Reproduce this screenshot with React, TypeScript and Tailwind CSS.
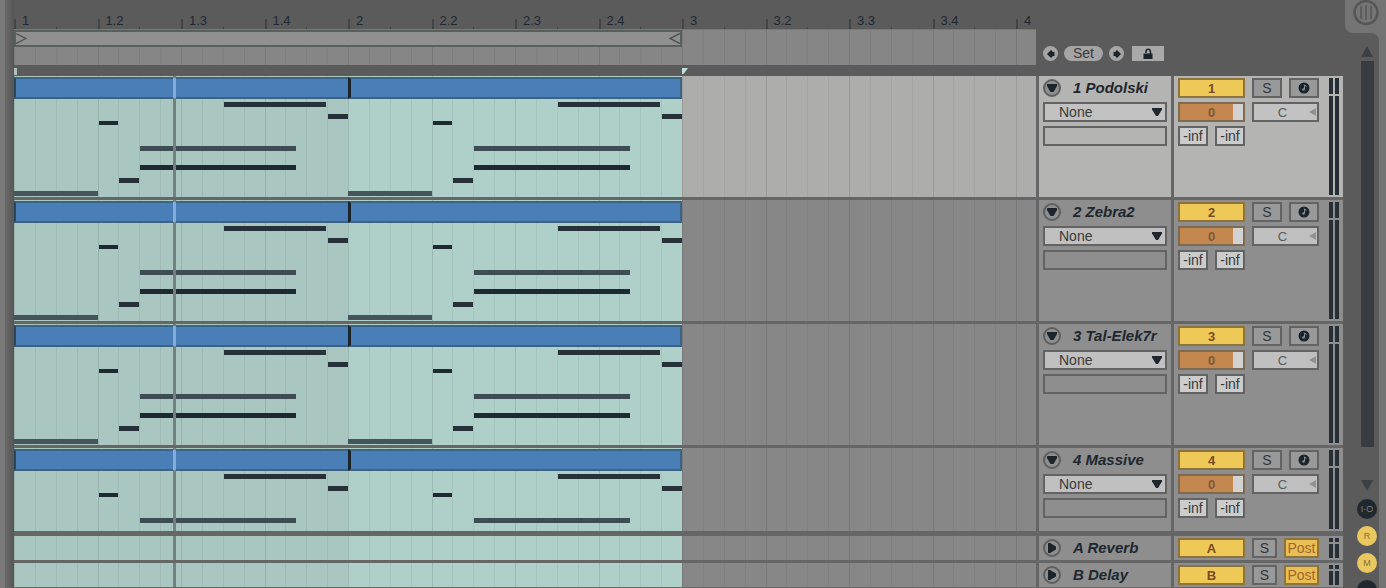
import { useState } from 'react';

interface Track {
  id: string;
  name: string;
  selected?: boolean;
  short?: boolean;
}

interface Note {
  start: number;
  length: number;
  y: number;
  h: number;
  color: string;
}

const TRACKS: Track[] = [
  { id: '1', name: 'Podolski', selected: true },
  { id: '2', name: 'Zebra2' },
  { id: '3', name: 'Tal-Elek7r' },
  { id: '4', name: 'Massive', short: true },
];

const RETURNS: Track[] = [
  { id: 'A', name: 'Reverb' },
  { id: 'B', name: 'Delay' },
];

const BEATS = ['1', '1.2', '1.3', '1.4', '2', '2.2', '2.3', '2.4', '3', '3.2', '3.3', '3.4', '4'];

// start and length in sixteenths, y in pixels from the top of the clip body
const NOTES: Note[] = [
  { start: 10.05, length: 4.9, y: 3, h: 5, color: '#27313a' },
  { start: 15.05, length: 0.95, y: 15, h: 5, color: '#27313a' },
  { start: 4.05, length: 0.95, y: 22, h: 4, color: '#1f2932' },
  { start: 6.05, length: 7.45, y: 47, h: 5, color: '#3e4d54' },
  { start: 6.05, length: 7.45, y: 66, h: 5, color: '#1f2932' },
  { start: 5.05, length: 0.95, y: 79, h: 5, color: '#27313a' },
  { start: 0, length: 4, y: 92, h: 5, color: '#45545a' },
];

function GridLines() {
  return (
    <div className="pointer-events-none absolute inset-0 grid grid-cols-[repeat(48,minmax(0,167fr))_minmax(0,160fr)]">
      {Array.from({ length: 49 }, (_, i) => (
        <div
          key={i}
          className={i % 4 === 0 ? 'border-l border-black/10' : 'border-l border-black/5'}
        />
      ))}
    </div>
  );
}

function Clip({ first }: { first?: boolean }) {
  return (
    <div className={`h-full overflow-hidden pt-px ${first ? 'bg-[#a9c6c0]' : 'bg-[#afcfc9]'}`}>
      <div
        className={`relative z-10 h-[22px] border-y-2 border-y-[#3d6384] bg-[#4a7eb6] ${
          first ? 'border-l-2 border-l-[#2c4558]' : 'border-r-2 border-l-3 border-r-[#3d6384] border-l-[#1c242c]'
        }`}
      />
      <svg
        className="relative z-10 block h-[98px] w-full"
        viewBox="0 0 16 98"
        preserveAspectRatio="none"
        shapeRendering="crispEdges"
        aria-hidden="true"
      >
        {NOTES.map((n) => (
          <rect key={`${n.start}-${n.y}`} x={n.start} y={n.y} width={n.length} height={n.h} fill={n.color} />
        ))}
      </svg>
    </div>
  );
}

function Lane({ withClips, selected }: { withClips?: boolean; selected?: boolean }) {
  return (
    <div className={`relative min-w-0 flex-1 ${selected ? 'bg-[#adadab]' : 'bg-[#878787]'}`}>
      <div className="grid h-full grid-cols-[334fr_334fr_354fr] overflow-hidden">
        {withClips ? (
          <>
            <Clip first />
            <Clip />
          </>
        ) : (
          <>
            <div className="bg-[#a9c6c0]" />
            <div className="bg-[#afcfc9]" />
          </>
        )}
      </div>
      <GridLines />
      <div className="absolute inset-y-0 left-[15.6%] z-20 w-[3px] bg-[#71817f]">
        {withClips && <div className="mt-[2px] h-5 bg-[#84acdb]" />}
      </div>
    </div>
  );
}

function FoldButton({ open, label }: { open: boolean; label: string }) {
  return (
    <button
      type="button"
      aria-label={label}
      className="flex h-[18px] w-[18px] shrink-0 items-center justify-center rounded-full border-2 border-[#5f5f5f] bg-[#8f8f8f]"
    >
      <svg viewBox="0 0 12 12" className="h-3 w-3" fill="#1c242c" aria-hidden="true">
        {open ? <path d="M1 2h10v2L7.500 10h-3L1 4z" /> : <path d="M2 1h2l6 3.500v3L4 11H2z" />}
      </svg>
    </button>
  );
}

function Meter({ short }: { short?: boolean }) {
  return (
    <div className="flex w-[10px] gap-[2px] py-[2px]">
      {[0, 1].map((i) => (
        <div key={i} className="flex flex-1 flex-col gap-[2px]">
          <div className={`bg-[#272e35] ${short ? 'h-1' : 'h-4'}`} />
          <div className="flex-1 bg-[#272e35]" />
        </div>
      ))}
    </div>
  );
}

function Activator({ id }: { id: string }) {
  const [on, setOn] = useState(true);

  return (
    <button
      type="button"
      aria-pressed={on}
      onClick={() => setOn(!on)}
      className={`h-5 w-[67px] border-2 text-[13px] leading-none font-bold text-[#7a4a22] ${
        on ? 'border-[#8d743c] bg-[#efc957]' : 'border-[#606060] bg-[#999999]'
      }`}
    >
      {id}
    </button>
  );
}

const boxClass = 'block h-5 border-2 border-[#636363] text-center leading-none';

function TrackRow({ track }: { track: Track }) {
  const title = `${track.id} ${track.name}`;
  const panel = track.selected ? 'bg-[#b4b4b2]' : 'bg-[#8e8e8e]';
  const field = track.selected ? 'bg-[#c2c2c2]' : 'bg-[#c0c0c0]';

  return (
    <div
      className={`flex border-[#666666] ${track.short ? 'h-[88px] border-b-[5px]' : 'h-[124px] border-b-[3px]'}`}
    >
      <Lane withClips selected={track.selected} />
      <div className={`flex w-[138px] shrink-0 flex-col gap-1 border-x-[3px] border-[#666666] px-1 pt-[2px] ${panel}`}>
        <div className="flex h-5 items-center gap-3">
          <FoldButton open label={`Fold ${title}`} />
          <h2 className="text-[15px] leading-5 font-bold whitespace-nowrap text-[#20272e] italic">{title}</h2>
        </div>
        <div className="relative">
          <select
            aria-label={`${title} device`}
            className={`block h-5 w-full appearance-none border-2 border-[#636363] pl-[14px] text-sm leading-none text-[#3a3a3a] ${field}`}
          >
            <option>None</option>
          </select>
          <svg viewBox="0 0 10 8" className="pointer-events-none absolute top-[6px] right-[5px] h-2 w-[10px]" fill="#20272e" aria-hidden="true">
            <path d="M0 0h10v1.500L6 8H4L0 1.500z" />
          </svg>
        </div>
        <input
          type="text"
          aria-label={`${title} parameter`}
          className={`w-full ${boxClass} ${panel}`}
        />
      </div>
      <div className={`flex w-[169px] shrink-0 justify-between px-1 ${panel}`}>
        <div className="flex flex-col gap-1 pt-[2px]">
          <div className="flex gap-[7px]">
            <Activator id={track.id} />
            <button type="button" aria-label={`Solo ${title}`} className={`${boxClass} w-[30px] bg-[#999999] text-sm text-[#30363b]`}>
              S
            </button>
            <button type="button" aria-label={`Arm ${title}`} className={`${boxClass} w-[30px] bg-[#999999]`}>
              <svg viewBox="0 0 12 12" className="mx-auto h-3 w-3" aria-hidden="true">
                <circle cx="6" cy="6" r="5.500" fill="#1c242c" />
                <path d="M6.500 7V3l2 1.500" stroke="#8a8f93" strokeWidth="1" fill="none" />
                <circle cx="5.500" cy="7.500" r="1.300" fill="#8a8f93" />
              </svg>
            </button>
          </div>
          <div className="flex gap-[7px]">
            <input
              type="text"
              aria-label={`${title} volume`}
              defaultValue="0"
              className="block h-5 w-[67px] border-2 border-[#7d6a52] bg-[linear-gradient(90deg,#c58750_84%,#d2d2d2_84%)] text-center text-[13px] leading-none font-bold text-[#7d5a36]"
            />
            <div className="relative">
              <input
                type="text"
                aria-label={`${title} pan`}
                defaultValue="C"
                className={`${boxClass} w-[67px] pr-[6px] text-[13px] text-[#5a5a5a] ${field}`}
              />
              <svg viewBox="0 0 7 8" className="pointer-events-none absolute top-[6px] right-[3px] h-2 w-[7px]" fill="#929292" aria-hidden="true">
                <path d="M7 0v8L0 4z" />
              </svg>
            </div>
          </div>
          <div className="flex gap-[7px]">
            {['A', 'B'].map((send) => (
              <input
                key={send}
                type="text"
                aria-label={`${title} send ${send}`}
                defaultValue="-inf"
                className={`${boxClass} w-[30px] bg-[#cccccc] text-sm text-[#3a3a3a]`}
              />
            ))}
          </div>
        </div>
        <Meter />
      </div>
    </div>
  );
}

function ReturnRow({ track }: { track: Track }) {
  const title = `${track.id} ${track.name}`;

  return (
    <div className="flex h-[27px] border-b-[3px] border-[#666666]">
      <Lane />
      <div className="flex w-[138px] shrink-0 items-center gap-3 border-x-[3px] border-[#666666] bg-[#8e8e8e] px-1">
        <FoldButton open={false} label={`Unfold ${title}`} />
        <h2 className="text-[15px] leading-5 font-bold whitespace-nowrap text-[#20272e] italic">{title}</h2>
      </div>
      <div className="flex w-[169px] shrink-0 justify-between bg-[#8e8e8e] px-1">
        <div className="flex items-center gap-[7px]">
          <Activator id={track.id} />
          <button type="button" aria-label={`Solo ${title}`} className={`${boxClass} w-[25px] bg-[#999999] text-sm text-[#30363b]`}>
            S
          </button>
          <button
            type="button"
            className="h-5 w-[35px] overflow-hidden border-2 border-[#8d743c] bg-[#e9bf55] text-center text-sm leading-none text-[#a2652f]"
          >
            Post
          </button>
        </div>
        <Meter short />
      </div>
    </div>
  );
}

function Ruler() {
  return (
    <div className="min-w-0 flex-1">
      <div className="grid h-[29px] grid-cols-[repeat(12,minmax(0,167fr))_minmax(0,40fr)] items-end">
        {BEATS.map((beat, i) => (
          <div key={beat} className="grid grid-cols-2 items-end">
            <span className="h-[10px] border-l-2 border-[#444444] pl-[6px] text-[13px] leading-[4px] text-[#1f2933]">
              {beat}
            </span>
            {i < 12 && <span className="h-[2px] border-l border-[#444444]" />}
          </div>
        ))}
      </div>
      <div className="relative h-9 border-t border-[#777777] bg-[#868686]">
        <GridLines />
        <div className="relative grid grid-cols-[668fr_354fr]">
          <div className="flex h-[17px] items-center justify-between border-2 border-[#595f5d] bg-[#909090]">
            <svg viewBox="0 0 11 11" className="h-[11px] w-[11px]" fill="none" stroke="#555a5a" strokeWidth="1.500" aria-hidden="true">
              <path d="M0 .5 10 5.500 0 10.500" />
            </svg>
            <svg viewBox="0 0 11 11" className="h-[11px] w-[11px]" fill="none" stroke="#4c5252" strokeWidth="1.500" aria-hidden="true">
              <path d="M11 .5 1 5.500l10 5" />
            </svg>
          </div>
        </div>
      </div>
      <div className="grid h-[11px] grid-cols-[668fr_354fr] items-end pb-px">
        <svg viewBox="0 0 6 8" className="h-2 w-[6px]" fill="#aebfbc" aria-hidden="true">
          <path d="M0 1h3v7H0z" />
        </svg>
        <svg viewBox="0 0 6 8" className="h-2 w-[6px]" fill="#c0e0dc" aria-hidden="true">
          <path d="M0 1h6L1.500 7H0z" />
        </svg>
      </div>
    </div>
  );
}

function LocatorBar() {
  const round = 'flex h-[15px] w-[15px] items-center justify-center rounded-full bg-[#a5a5a5]';

  return (
    <div className="flex w-[307px] shrink-0 items-start pt-[46px] pl-[7px]">
      <button type="button" aria-label="Previous locator" className={round}>
        <svg viewBox="0 0 10 10" className="h-[10px] w-[10px]" fill="#1c242c" aria-hidden="true">
          <path d="M1 5l4-4 2 2h1.500v4H7L5 9z" />
        </svg>
      </button>
      <button type="button" className="ml-[6px] h-[15px] w-[39px] rounded-full bg-[#a5a5a5] text-sm leading-[15px] text-[#3a3a3a]">
        Set
      </button>
      <button type="button" aria-label="Next locator" className={`ml-[6px] ${round}`}>
        <svg viewBox="0 0 10 10" className="h-[10px] w-[10px]" fill="#1c242c" aria-hidden="true">
          <path d="M9 5L5 1 3 3H1.500v4H3l2 2z" />
        </svg>
      </button>
      <button type="button" aria-label="Lock envelopes" className="ml-2 flex h-[15px] w-8 items-center justify-center bg-[#a9a9a9]">
        <svg viewBox="0 0 12 12" className="h-3 w-3" aria-hidden="true">
          <path d="M4 5V3.500a2.200 2.200 0 0 1 4.400 0V6" stroke="#1c242c" strokeWidth="1.500" fill="none" />
          <path d="M1.500 5.500h9V11h-9z" fill="#1c242c" />
        </svg>
      </button>
    </div>
  );
}

function SideBar() {
  const badge =
    'h-5 w-5 shrink-0 rounded-full text-center text-[9px] leading-5';

  return (
    <aside className="flex w-[43px] shrink-0 flex-col bg-[#747474]">
      <div className="bg-[#5b5b5b]">
        <div className="ml-[2px] flex h-[33px] justify-center rounded-bl-lg bg-[#747474]">
          <button type="button" aria-label="Session view" className="h-[26px] w-[26px]">
            <svg viewBox="0 0 26 26" className="h-[26px] w-[26px]" fill="none" stroke="#565656" aria-hidden="true">
              <circle cx="13" cy="12.500" r="11.500" strokeWidth="2.500" />
              <path d="M8 6v13M13 5v15M18 6v13" strokeWidth="1.500" />
            </svg>
          </button>
        </div>
      </div>
      <div className="mr-[7px] flex min-h-0 flex-1 flex-col items-center overflow-hidden rounded-tr-lg bg-[#5b5b5b] pt-[13px] pl-3">
        <svg viewBox="0 0 12 11" className="h-[11px] w-3 shrink-0" fill="#3c4044" aria-hidden="true">
          <path d="M6 0l6 11H0z" />
        </svg>
        <div className="mt-1 w-[13px] flex-1 bg-[#383b40]" />
        <svg viewBox="0 0 12 11" className="mt-[33px] h-[11px] w-3 shrink-0" fill="#3c4044" aria-hidden="true">
          <path d="M0 0h12L6 11z" />
        </svg>
        <button type="button" aria-label="Show I/O" className={`mt-2 bg-[#20282f] text-[#7b8186] ${badge}`}>
          I·O
        </button>
        <button type="button" aria-label="Show returns" className={`mt-[7px] bg-[#e9c860] text-[#8a6f35] ${badge}`}>
          R
        </button>
        <button type="button" aria-label="Show mixer" className={`mt-[7px] bg-[#e9c860] text-[#8a6f35] ${badge}`}>
          M
        </button>
        <button type="button" aria-label="Show delays" className={`mt-[7px] -mb-3 bg-[#20282f] ${badge}`} />
      </div>
    </aside>
  );
}

export default function App() {
  return (
    <div className="flex h-screen min-w-[900px] overflow-hidden bg-[#5b5b5b] font-['Liberation_Sans',Arial,sans-serif]">
      <div className="w-[14px] shrink-0 border-l-[5px] border-[#7a7a7a] bg-[linear-gradient(90deg,#6a6a6a,#565656)]" />
      <main className="min-w-0 flex-1">
        <header className="flex h-[76px]">
          <Ruler />
          <LocatorBar />
        </header>
        {TRACKS.map((t) => (
          <TrackRow key={t.id} track={t} />
        ))}
        {RETURNS.map((t) => (
          <ReturnRow key={t.id} track={t} />
        ))}
      </main>
      <SideBar />
    </div>
  );
}
